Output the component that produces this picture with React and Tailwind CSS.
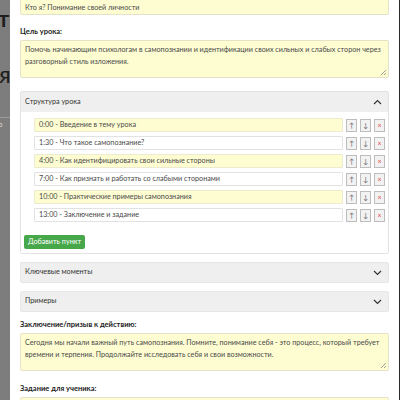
import React from "react";

const items = [
  { t: "0:00 - Введение в тему урока", y: true },
  { t: "1:30 - Что такое самопознание?", y: false },
  { t: "4:00 - Как идентифицировать свои сильные стороны", y: true },
  { t: "7:00 - Как признать и работать со слабыми сторонами", y: false },
  { t: "10:00 - Практические примеры самопознания", y: true },
  { t: "13:00 - Заключение и задание", y: false },
];

function Chevron({ up }) {
  return (
    <svg width="9" height="6" viewBox="0 0 9 6" className="shrink-0">
      <path
        d={up ? "M1 5 L4.5 1.5 L8 5" : "M1 1 L4.5 4.5 L8 1"}
        fill="none"
        stroke="#333"
        strokeWidth="1.2"
      />
    </svg>
  );
}

function Resize() {
  return (
    <svg width="7" height="7" viewBox="0 0 7 7" className="absolute right-[1px] bottom-[1px]">
      <path d="M6 1 L1 6 M6 4 L4 6" stroke="#888" strokeWidth="0.8" />
    </svg>
  );
}

function SmallBtn({ children, red }) {
  return (
    <div
      className={`w-[11px] h-[13px] border border-[#bdbdbd] bg-[#f2f2f2] flex items-center justify-center text-[7px] leading-none ${
        red ? "text-[#e04848]" : "text-[#666]"
      }`}
    >
      {children}
    </div>
  );
}

export default function App() {
  return (
    <div
      className="w-[400px] h-[400px] overflow-hidden flex bg-[#7d7d7d]"
      style={{ fontFamily: "Lato, 'Noto Sans', sans-serif" }}
    >
      <div className="w-[10px] shrink-0 relative overflow-hidden text-[#1e1e1e]">
        <div className="absolute left-[-2px] top-[8px] text-[22px] font-bold leading-none">т</div>
        <div className="absolute left-[-1px] top-[62px] text-[24px] leading-none">я</div>
        <div className="absolute left-0 top-[117px] w-[10px] h-px bg-[#9a9a9a]" />
        <div className="absolute left-[-3px] top-[121px] text-[7px] text-[#ddd] leading-none">ю</div>
      </div>
      <div className="flex-1 bg-white border-r border-[#2a2a2a] overflow-hidden">
        <div className="mt-[-5px] pl-[10px] pr-[10px] flex flex-col text-[7.2px] text-[#4a4a4a]">
          <div className="h-[20px] bg-[#fefdd2] border border-[#e4e3c8] rounded-[2px] flex items-center pl-[4px] pt-[6px]">
            Кто я? Понимание своей личности
          </div>
          <div className="mt-[12px] text-[7.5px] font-bold text-[#222] leading-[10px] mb-[3px]">Цель урока:</div>
          <div className="relative h-[38px] bg-[#fefdd2] border border-[#e4e3c8] rounded-[2px] px-[4px] pt-[3px] leading-[12px]">
            Помочь начинающим психологам в самопознании и идентификации своих сильных и слабых сторон через разговорный стиль изложения.
            <Resize />
          </div>

          <div className="mt-[13px] border border-[#e2e2e2] rounded-[2px]">
            <div className="h-[20px] bg-[#efefef] flex items-center justify-between pl-[4px] pr-[6px] text-[#333]">
              <span>Структура урока</span>
              <Chevron up />
            </div>
            <div className="pt-[6px] pb-[4px] pl-[3px] pr-[3px] bg-white">
              <div className="flex flex-col gap-[4px] pl-[10px]">
                {items.map((it, i) => (
                  <div key={i} className="flex items-center gap-[3px]">
                    <div
                      className={`flex-1 h-[14px] border rounded-[1px] flex items-center pl-[4px] ${
                        it.y ? "bg-[#fefdd2] border-[#ecebd0]" : "bg-white border-[#e2e2e2]"
                      }`}
                    >
                      {it.t}
                    </div>
                    <SmallBtn>↑</SmallBtn>
                    <SmallBtn>↓</SmallBtn>
                    <SmallBtn red>×</SmallBtn>
                  </div>
                ))}
              </div>
              <div className="mt-[13px] w-[61px] h-[14px] bg-[#47a74b] text-white rounded-[2px] flex items-center justify-center text-[7.2px]">
                Добавить пункт
              </div>
            </div>
          </div>

          <div className="mt-[8px] h-[21px] bg-[#efefef] border border-[#e6e6e6] rounded-[2px] flex items-center justify-between pl-[4px] pr-[6px] text-[#333]">
            <span>Ключевые моменты</span>
            <Chevron />
          </div>
          <div className="mt-[8px] h-[21px] bg-[#efefef] border border-[#e6e6e6] rounded-[2px] flex items-center justify-between pl-[4px] pr-[6px] text-[#333]">
            <span>Примеры</span>
            <Chevron />
          </div>

          <div className="mt-[8px] text-[7.5px] font-bold text-[#222] leading-[10px] mb-[3px]">Заключение/призыв к действию:</div>
          <div className="relative h-[38px] bg-[#fefdd2] border border-[#e4e3c8] rounded-[2px] px-[4px] pt-[3px] leading-[12px]">
            Сегодня мы начали важный путь самопознания. Помните, понимание себя - это процесс, который требует времени и терпения. Продолжайте исследовать себя и свои возможности.
            <Resize />
          </div>
          <div className="mt-[13px] text-[7.5px] font-bold text-[#222] leading-[10px] mb-[3px]">Задание для ученика:</div>
          <div className="relative h-[38px] bg-[#fefdd2] border border-[#e4e3c8] rounded-[2px]" />
        </div>
      </div>
    </div>
  );
}
